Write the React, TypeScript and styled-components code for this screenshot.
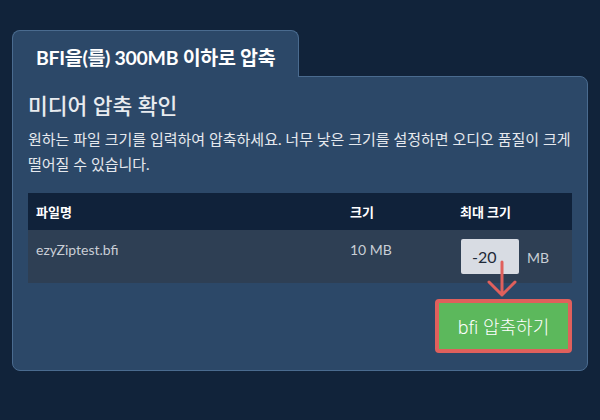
import * as React from 'react'
import styled, { createGlobalStyle } from 'styled-components'

const GlobalStyle = createGlobalStyle`
  html, body {
    margin: 0;
    padding: 0;
    background: #11233a;
  }
  body {
    font-family: 'Lato', 'Noto Sans CJK KR', sans-serif;
    color: #e6e9ee;
  }
`

const Page = styled.div`
  padding: 30px 0 0 12px;
  width: 576px;
`

const Tab = styled.div`
  display: inline-flex;
  align-items: center;
  box-sizing: border-box;
  position: relative;
  z-index: 1;
  margin-bottom: -1px;
  padding: 5px 23px 0;
  height: 47px;
  background: #2c4868;
  border: 1px solid #4a6b8f;
  border-bottom: none;
  border-radius: 8px 8px 0 0;
  font-size: 19.5px;
  font-weight: 700;
  color: #ffffff;
  letter-spacing: -0.3px;
`

const Panel = styled.div`
  background: #2c4868;
  border: 1px solid #4a6b8f;
  border-radius: 0 8px 8px 8px;
  padding: 15px 15px 17px 15px;
`

const Title = styled.h2`
  margin: 0;
  font-size: 21.5px;
  font-weight: 500;
  line-height: 28px;
  color: #e8ebef;
`

const Description = styled.p`
  margin: 7px 0 0;
  font-size: 15px;
  line-height: 25px;
  color: #e6e9ee;
`

const Table = styled.table`
  width: 100%;
  margin-top: 16px;
  border-collapse: collapse;
`

const HeadCell = styled.th<{ width?: number }>`
  background: #10223a;
  text-align: left;
  font-size: 13px;
  font-weight: 700;
  color: #ffffff;
  height: 37px;
  padding: 0 8px;
  ${({ width }) => width && `width: ${width}px;`}
`

const Cell = styled.td`
  background: #2e3f54;
  vertical-align: top;
  padding: 10px 8px 0;
  height: 43px;
  font-size: 14px;
  line-height: 20px;
  color: #c9ced6;
`

const SizeCell = styled(Cell)`
  padding: 9px 8px 9px 9px;
  height: 35px;
`

const SizeField = styled.div`
  display: flex;
  align-items: center;
  gap: 8px;
`

const SizeInput = styled.div`
  width: 47px;
  height: 35px;
  line-height: 35px;
  padding-left: 11px;
  background: #d8dce3;
  border-radius: 2px;
  color: #1e2a38;
  font-size: 16px;
`

const Unit = styled.span`
  font-size: 14px;
  color: #c9ced6;
  padding-top: 2px;
`

const Footer = styled.div`
  display: flex;
  justify-content: flex-end;
  margin-top: 16px;
  position: relative;
`

const Highlight = styled.div`
  border: 4px solid #e0605c;
  border-radius: 4px;
`

const CompressButton = styled.button`
  display: block;
  width: 129px;
  height: 46px;
  border: none;
  background: #5cb85c;
  color: #ffffff;
  font-family: 'Noto Sans', 'Noto Sans CJK KR', sans-serif;
  font-size: 18px;
  font-weight: 300;
  cursor: pointer;
`

const Arrow = styled.svg`
  position: absolute;
  right: 55px;
  top: -37px;
  overflow: visible;
`

export default function App() {
  return (
    <>
      <GlobalStyle />
      <Page>
        <Tab>BFI을(를) 300MB 이하로 압축</Tab>
        <Panel>
          <Title>미디어 압축 확인</Title>
          <Description>
            원하는 파일 크기를 입력하여 압축하세요. 너무 낮은 크기를 설정하면 오디오 품질이 크게
            떨어질 수 있습니다.
          </Description>
          <Table>
            <thead>
              <tr>
                <HeadCell width={298}>파일명</HeadCell>
                <HeadCell width={94}>크기</HeadCell>
                <HeadCell>최대 크기</HeadCell>
              </tr>
            </thead>
            <tbody>
              <tr>
                <Cell>ezyZiptest.bfi</Cell>
                <Cell>10 MB</Cell>
                <SizeCell>
                  <SizeField>
                    <SizeInput>-20</SizeInput>
                    <Unit>MB</Unit>
                  </SizeField>
                </SizeCell>
              </tr>
            </tbody>
          </Table>
          <Footer>
            <Highlight>
              <CompressButton>bfi 압축하기</CompressButton>
            </Highlight>
            <Arrow width="30" height="36" viewBox="0 0 30 36">
              <path
                d="M15 0 V33 M2 20 L15 33 L28 20"
                fill="none"
                stroke="#e0605c"
                strokeWidth="3"
                strokeLinecap="round"
                strokeLinejoin="round"
              />
            </Arrow>
          </Footer>
        </Panel>
      </Page>
    </>
  )
}
